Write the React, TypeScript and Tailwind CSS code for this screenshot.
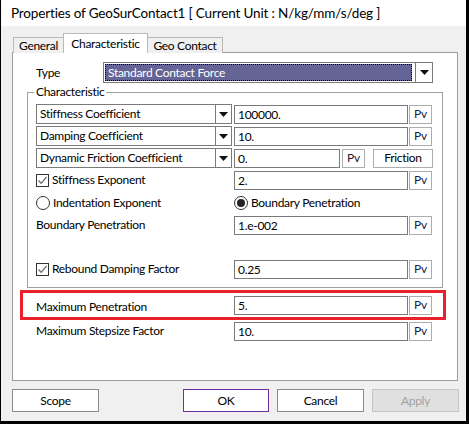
import React from 'react';

const FONT = "font-['Lato','Liberation_Sans',sans-serif] tracking-[-0.3px]";

function Arrow() {
  return (
    <svg width="9" height="5" viewBox="0 0 9 5" className="block">
      <path d="M0 0 L9 0 L4.5 5 Z" fill="#111" />
    </svg>
  );
}

function Combo({ label, width = 'w-[196px]' }: { label: string; width?: string }) {
  return (
    <div className={`${width} h-[20px] flex border border-[#7a7a7a] bg-white`}>
      <div className="flex-1 pl-[3px] text-[12px] leading-[18px] text-black truncate">{label}</div>
      <div className="w-[16px] border-l border-[#7a7a7a] flex items-center justify-center">
        <Arrow />
      </div>
    </div>
  );
}

function Field({ value, width = 'w-[174px]' }: { value: string; width?: string }) {
  return (
    <div className={`${width} h-[19px] border border-[#7a7a7a] bg-white pl-[3px] text-[12px] leading-[17px] text-black`}>
      {value}
    </div>
  );
}

function Pv() {
  return (
    <div className="w-[23px] h-[19px] border border-[#adadad] bg-white flex items-center justify-center text-[12px] text-[#1a1a40]">
      Pv
    </div>
  );
}

function Check({ label }: { label: string }) {
  return (
    <div className="flex items-center gap-[3px]">
      <div className="w-[13px] h-[13px] border border-[#333] bg-white flex items-center justify-center">
        <svg width="11" height="11" viewBox="0 0 11 11">
          <path d="M1.5 5.5 L4.2 8.3 L9.5 2" fill="none" stroke="#6f6f6f" strokeWidth="1.3" />
        </svg>
      </div>
      <span className="text-[12px] text-black">{label}</span>
    </div>
  );
}

function Radio({ label, on }: { label: string; on?: boolean }) {
  return (
    <div className="flex items-center gap-[3px]">
      <div className="w-[14px] h-[14px] rounded-full border border-[#333] bg-white flex items-center justify-center">
        {on && <div className="w-[8px] h-[8px] rounded-full bg-[#222]" />}
      </div>
      <span className="text-[12px] text-black">{label}</span>
    </div>
  );
}

function Row({ left, children, className = '' }: { left: React.ReactNode; children: React.ReactNode; className?: string }) {
  return (
    <div className={`flex items-center h-[20px] ${className}`}>
      <div className="w-[198px] flex items-center">{left}</div>
      <div className="flex items-center gap-px">{children}</div>
    </div>
  );
}

function Label({ text }: { text: string }) {
  return <span className="text-[12px] text-black">{text}</span>;
}

function Btn({ label, tone = 'normal' }: { label: string; tone?: 'normal' | 'focus' | 'disabled' }) {
  const cls =
    tone === 'focus'
      ? 'border-[#6b2fa3] bg-white text-black'
      : tone === 'disabled'
      ? 'border-[#c4c4c4] bg-[#e0e0e0] text-[#a2a2a2]'
      : 'border-[#8a8a8a] bg-white text-black';
  return (
    <div className={`h-[23px] border flex items-center justify-center text-[12px] ${cls}`}>{label}</div>
  );
}

export default function App() {
  return (
    <div className={`w-[469px] h-[424px] flex flex-col border-l border-r-[3px] border-b-[3px] border-black bg-[#f0f0f0] ${FONT}`}>
      {/* Title */}
      <div className="h-[26px] bg-white pl-[10px] text-[13.5px] tracking-[-0.15px] leading-[26px] text-black whitespace-nowrap">
        Properties of GeoSurContact1 [ Current Unit : N/kg/mm/s/deg ]
      </div>

      <div className="flex-1 pl-[11px] pt-[7px]">
        {/* Tabs */}
        <div className="flex items-end h-[20px] ml-px relative z-10">
          <div className="w-[50px] h-[16px] border border-b-0 border-r-0 border-[#b9b9b9] bg-[#f0f0f0] flex items-center justify-center text-[12px] text-black">
            General
          </div>
          <div className="w-[85px] h-[20px] border border-b-0 border-[#b9b9b9] bg-white flex items-start justify-center pt-[1px] text-[12px] text-black">
            Characteristic
          </div>
          <div className="w-[75px] h-[16px] border border-b-0 border-l-0 border-[#b9b9b9] bg-[#f0f0f0] flex items-center justify-center text-[12px] text-black">
            Geo Contact
          </div>
        </div>

        {/* Panel */}
        <div className="w-[446px] h-[329px] -mt-px border border-[#9c9c9c] bg-white pt-[9px]">
          {/* Type */}
          <div className="flex items-center h-[21px]">
            <div className="w-[90px] pl-[23px] text-[12px] text-black">Type</div>
            <div className="w-[330px] h-[21px] border border-[#7a7a7a] bg-white flex">
              <div className="flex-1 p-[1px] pr-[3px]">
                <div className="h-full bg-[#646496] outline-1 outline-dotted outline-black -outline-offset-1 pl-[3px] text-[12px] leading-[17px] text-white">
                  Standard Contact Force
                </div>
              </div>
              <div className="w-[17px] border-l border-[#7a7a7a] flex items-center justify-center">
                <Arrow />
              </div>
            </div>
          </div>

          {/* Characteristic group */}
          <div className="relative ml-[14px] mt-[9px] w-[416px] h-[196px] border border-[#a0a0a0] pl-[8px] pt-[11px]">
            <span className="absolute -top-[10px] left-[6px] bg-white px-[2px] text-[12px] text-black">Characteristic</span>

            <div className="flex flex-col gap-[2px]">
              <Row left={<Combo label="Stiffness Coefficient" />}>
                <Field value="100000." />
                <Pv />
              </Row>
              <Row left={<Combo label="Damping Coefficient" />}>
                <Field value="10." />
                <Pv />
              </Row>
              <Row left={<Combo label="Dynamic Friction Coefficient" />}>
                <Field value="0." width="w-[106px]" />
                <div className="ml-px"><Pv /></div>
                <div className="ml-[7px] w-[60px] h-[19px] border border-[#adadad] bg-white flex items-center justify-center text-[12px] text-black">
                  Friction
                </div>
              </Row>
              <Row left={<Check label="Stiffness Exponent" />}>
                <Field value="2." />
                <Pv />
              </Row>
            </div>

            <Row className="mt-[3px]" left={<Radio label="Indentation Exponent" />}>
              <Radio label="Boundary Penetration" on />
            </Row>

            <Row className="mt-[2px]" left={<Label text="Boundary Penetration" />}>
              <Field value="1.e-002" />
              <Pv />
            </Row>

            <Row className="mt-[24px]" left={<Check label="Rebound Damping Factor" />}>
              <Field value="0.25" />
              <Pv />
            </Row>
          </div>

          {/* Maximum Penetration (highlighted) */}
          <div className="ml-[7px] mt-[2px] w-[426px] h-[30px] border-[3px] border-[#e8212b] pl-[13px] flex items-center">
            <div className="w-[198px]"><Label text="Maximum Penetration" /></div>
            <div className="flex items-center gap-px">
              <Field value="5." />
              <Pv />
            </div>
          </div>

          <Row className="mt-px pl-[23px]" left={<Label text="Maximum Stepsize Factor" />}>
            <Field value="10." />
            <Pv />
          </Row>
        </div>

        {/* Buttons */}
        <div className="flex mt-[8px]">
          <div className="w-[87px]"><Btn label="Scope" /></div>
          <div className="w-[86px] ml-[84px]"><Btn label="OK" tone="focus" /></div>
          <div className="w-[87px] ml-[8px]"><Btn label="Cancel" /></div>
          <div className="w-[87px] ml-[8px]"><Btn label="Apply" tone="disabled" /></div>
        </div>
      </div>
    </div>
  );
}
